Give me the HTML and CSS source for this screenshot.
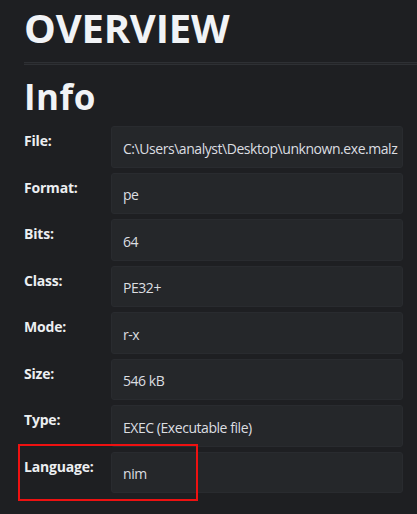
FILE: index.html
```html
<!DOCTYPE html>
<html>
<head>
<meta charset="utf-8">
<link rel="stylesheet" href="styles.css">
</head>
<body>
<main class="page">
  <h1 class="title">OVERVIEW</h1>
  <hr class="rule">
  <h2 class="section">Info</h2>
  <div class="info">
    <div class="label">File:</div><div class="value">C:\Users\analyst\Desktop\unknown.exe.malz</div>
    <div class="label">Format:</div><div class="value">pe</div>
    <div class="label">Bits:</div><div class="value">64</div>
    <div class="label">Class:</div><div class="value">PE32+</div>
    <div class="label">Mode:</div><div class="value">r-x</div>
    <div class="label">Size:</div><div class="value">546 kB</div>
    <div class="label">Type:</div><div class="value">EXEC (Executable file)</div>
    <div class="label highlight-wrap">Language:<span class="highlight"></span></div><div class="value">nim</div>
  </div>
</main>
</body>
</html>
```
FILE: styles.css
```css
html, body {
  margin: 0;
  padding: 0;
  background: #1e1f22;
}
body {
  font-family: "Open Sans", "Noto Sans", sans-serif;
  color: #e6e8eb;
  width: 417px;
  height: 514px;
  overflow: hidden;
}
.page {
  padding: 4px 0 0 24px;
}
.title {
  margin: 0;
  font-size: 40px;
  line-height: 48px;
  font-weight: 700;
  color: #f1f3f6;
  letter-spacing: -0.2px;
}
.rule {
  margin: 10px 0 0 0;
  height: 1px;
  border: 0;
  border-top: 1px solid #2e3034;
  border-bottom: 1px solid #2e3034;
  background: #232427;
}
.section {
  margin: 11px 0 0 0;
  font-size: 35px;
  line-height: 42px;
  font-weight: 700;
  color: #f1f3f6;
  letter-spacing: 0.5px;
}
.info {
  margin-top: 8px;
  display: grid;
  grid-template-columns: 87px 292px;
  row-gap: 5px;
}
.label {
  font-size: 14px;
  line-height: 21px;
  font-weight: 700;
  padding-top: 4px;
  color: #eceef1;
  letter-spacing: -0.2px;
}
.value {
  box-sizing: border-box;
  height: 41.5px;
  padding: 10.5px 11px 8px 11px;
  font-size: 14px;
  line-height: 21px;
  letter-spacing: -0.45px;
  color: #dcdee1;
  background: #25272a;
  border: 1px solid #292b2f;
  border-radius: 3px;
  white-space: nowrap;
}
.highlight-wrap {
  position: relative;
}
.highlight {
  position: absolute;
  left: -6px;
  top: -7.5px;
  width: 176px;
  height: 53px;
  border: 2px solid #ee1111;
}
```
